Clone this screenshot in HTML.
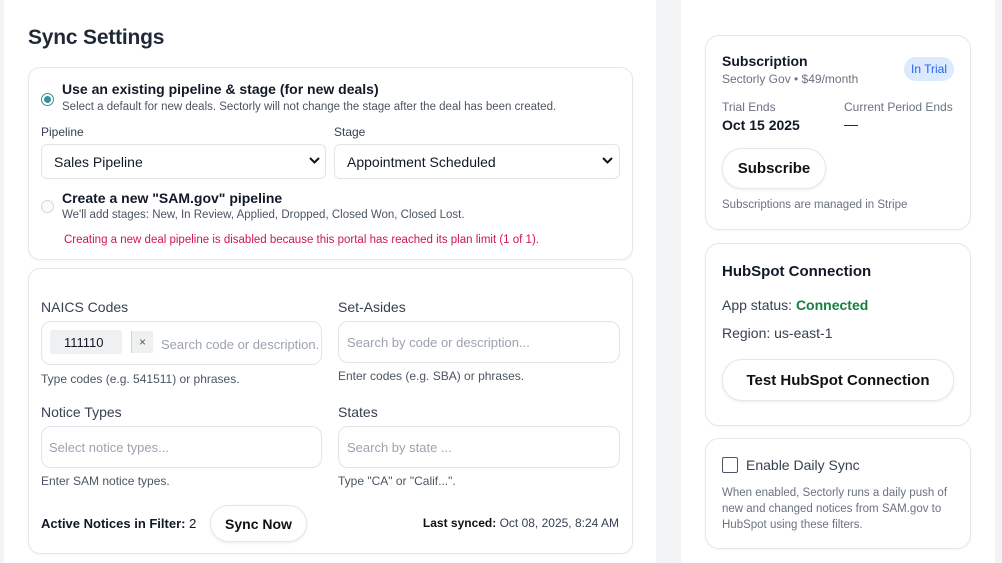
<!DOCTYPE html>
<html style="width:1002px;height:563px;overflow:hidden"><head><meta charset="utf-8"><style>
*{box-sizing:border-box;margin:0;padding:0}
body{width:1002px;height:563px;overflow:hidden;background:#f3f4f6;font-family:"Liberation Sans",sans-serif;color:#111827;position:relative}
.abs{position:absolute}
.panel{background:#fff;border-radius:16px}
.card{position:absolute;border:1px solid #e5e7eb;border-radius:12px;background:#fff;box-shadow:0 1px 2px rgba(0,0,0,.04)}
.t{position:absolute;white-space:nowrap}
.inp{position:absolute;border:1px solid #e2e4e8;border-radius:10px;background:#fff}
.ph{position:absolute;color:#9ca3af;font-size:13px;white-space:nowrap}
.help{font-size:12px;color:#4b5563}
.lbl{font-size:14px;color:#374151}
.btn{position:absolute;border:1px solid #e5e7eb;border-radius:20px;background:#fff;box-shadow:0 1px 3px rgba(0,0,0,.08);font-weight:bold;display:flex;align-items:center;justify-content:center;color:#111}
</style></head><body>
<div class="abs panel" style="left:4px;top:-16px;width:652px;height:579px;border-radius:16px 16px 0 0"></div>
<div class="abs panel" style="left:681px;top:-16px;width:314px;height:579px;border-radius:16px 16px 0 0"></div>

<div class="t" style="left:28px;top:26px;font-size:21px;font-weight:bold;color:#1f2937;letter-spacing:-0.2px">Sync Settings</div>

<div class="card" style="left:28px;top:67px;width:605px;height:193px"></div>
<div class="abs" style="left:41px;top:93px;width:13px;height:13px;border-radius:50%;border:1px solid #3b8f9c;background:#fff"><div class="abs" style="left:2px;top:2px;width:7px;height:7px;border-radius:50%;background:#3b8f9c"></div></div>
<div class="t" style="left:62px;top:81px;font-size:14px;font-weight:bold">Use an existing pipeline &amp; stage (for new deals)</div>
<div class="t help" style="left:62px;top:101px;font-size:11.5px">Select a default for new deals. Sectorly will not change the stage after the deal has been created.</div>
<div class="t" style="left:41px;top:125px;font-size:12px;color:#374151">Pipeline</div>
<div class="t" style="left:334px;top:125px;font-size:12px;color:#374151">Stage</div>
<div class="inp" style="left:41px;top:144px;width:285px;height:35px;border-radius:6px"></div>
<div class="t" style="left:54px;top:154px;font-size:14px">Sales Pipeline</div>
<svg class="abs" style="left:309px;top:157px" width="11" height="7" viewBox="0 0 11 7"><path d="M1 1l4.5 4.5L10 1" fill="none" stroke="#111" stroke-width="2"/></svg>
<div class="inp" style="left:334px;top:144px;width:286px;height:35px;border-radius:6px"></div>
<div class="t" style="left:347px;top:154px;font-size:14px">Appointment Scheduled</div>
<svg class="abs" style="left:602px;top:157px" width="11" height="7" viewBox="0 0 11 7"><path d="M1 1l4.5 4.5L10 1" fill="none" stroke="#111" stroke-width="2"/></svg>
<div class="abs" style="left:41px;top:200px;width:13px;height:13px;border-radius:50%;border:1px solid #d1d5db;background:#f9fafb"></div>
<div class="t" style="left:62px;top:190px;font-size:14px;font-weight:bold">Create a new "SAM.gov" pipeline</div>
<div class="t help" style="left:62px;top:209px;font-size:11.5px">We'll add stages: New, In Review, Applied, Dropped, Closed Won, Closed Lost.</div>
<div class="t" style="left:64px;top:234px;font-size:11.5px;color:#d1164f">Creating a new deal pipeline is disabled because this portal has reached its plan limit (1 of 1).</div>

<div class="card" style="left:28px;top:268px;width:605px;height:286px"></div>
<div class="t lbl" style="left:41px;top:299px">NAICS Codes</div>
<div class="inp" style="left:41px;top:321px;width:281px;height:44px"></div>
<div class="abs" style="left:50px;top:330px;width:72px;height:24px;background:#eef0f2;border-radius:3px"></div>
<div class="abs" style="left:131px;top:331px;width:22px;height:22px;background:#eef0f2;border-left:1px solid #d1d5db"></div>
<div class="t" style="left:64px;top:335px;font-size:13px">111110</div>
<div class="t" style="left:139px;top:335px;font-size:12px;color:#555">×</div>
<div class="ph" style="left:161px;top:337px">Search code or description.</div>
<div class="t help" style="left:41px;top:372px">Type codes (e.g. 541511) or phrases.</div>

<div class="t lbl" style="left:338px;top:299px">Set-Asides</div>
<div class="inp" style="left:338px;top:321px;width:282px;height:42px"></div>
<div class="ph" style="left:347px;top:335px">Search by code or description...</div>
<div class="t help" style="left:338px;top:369px">Enter codes (e.g. SBA) or phrases.</div>

<div class="t lbl" style="left:41px;top:404px">Notice Types</div>
<div class="inp" style="left:41px;top:426px;width:281px;height:42px"></div>
<div class="ph" style="left:49px;top:440px">Select notice types...</div>
<div class="t help" style="left:41px;top:474px">Enter SAM notice types.</div>

<div class="t lbl" style="left:338px;top:404px">States</div>
<div class="inp" style="left:338px;top:426px;width:282px;height:42px"></div>
<div class="ph" style="left:347px;top:440px">Search by state ...</div>
<div class="t help" style="left:338px;top:474px">Type "CA" or "Calif...".</div>

<div class="t" style="left:41px;top:516px;font-size:13px;font-weight:bold">Active Notices in Filter: <span style="font-weight:normal">2</span></div>
<div class="btn" style="left:210px;top:505px;width:97px;height:37px;font-size:14px">Sync Now</div>
<div class="t" style="right:383px;top:516px;font-size:12px;color:#374151"><b style="color:#111">Last synced:</b> Oct 08, 2025, 8:24 AM</div>

<!-- right -->
<div class="card" style="left:705px;top:35px;width:266px;height:195px;border-radius:14px"></div>
<div class="t" style="left:722px;top:53px;font-size:14px;font-weight:bold">Subscription</div>
<div class="t" style="left:722px;top:72px;font-size:12px;color:#6b7280">Sectorly Gov • $49/month</div>
<div class="abs" style="left:904px;top:57px;width:50px;height:24px;border-radius:12px;background:#dbeafe;color:#2563eb;font-size:12px;display:flex;align-items:center;justify-content:center">In Trial</div>
<div class="t" style="left:722px;top:100px;font-size:12px;color:#6b7280">Trial Ends</div>
<div class="t" style="left:722px;top:117px;font-size:14px;font-weight:bold">Oct 15 2025</div>
<div class="t" style="left:844px;top:100px;font-size:12px;color:#6b7280">Current Period Ends</div>
<div class="t" style="left:844px;top:116px;font-size:14px">—</div>
<div class="btn" style="left:722px;top:148px;width:104px;height:41px;font-size:15px">Subscribe</div>
<div class="t" style="left:722px;top:199px;font-size:11.5px;color:#6b7280">Subscriptions are managed in Stripe</div>

<div class="card" style="left:705px;top:243px;width:266px;height:183px;border-radius:14px"></div>
<div class="t" style="left:722px;top:263px;font-size:15px;font-weight:bold">HubSpot Connection</div>
<div class="t" style="left:722px;top:297px;font-size:14px;color:#374151">App status: <b style="color:#15803d">Connected</b></div>
<div class="t" style="left:722px;top:325px;font-size:14px;color:#374151">Region: us-east-1</div>
<div class="btn" style="left:722px;top:359px;width:232px;height:42px;font-size:15px">Test HubSpot Connection</div>

<div class="card" style="left:705px;top:438px;width:266px;height:111px;border-radius:14px"></div>
<div class="abs" style="left:722px;top:457px;width:16px;height:16px;border:1.5px solid #4b5563;border-radius:2px"></div>
<div class="t" style="left:746px;top:457px;font-size:14px;color:#374151">Enable Daily Sync</div>
<div class="abs" style="left:722px;top:485px;width:240px;font-size:11.5px;line-height:16px;color:#6b7280">When enabled, Sectorly runs a daily push of new and changed notices from SAM.gov to HubSpot using these filters.</div>
</body></html>
